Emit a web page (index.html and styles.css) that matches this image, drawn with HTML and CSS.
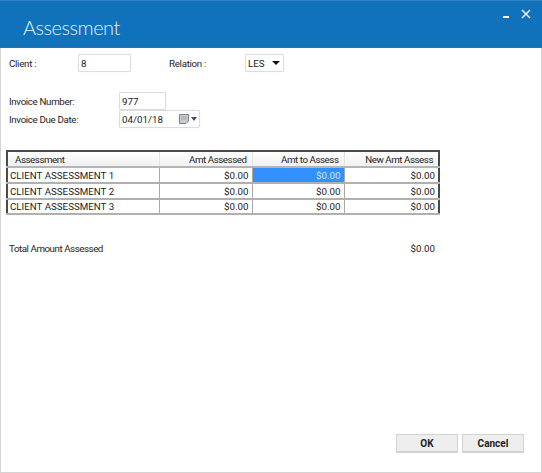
FILE: index.html
```html
<!DOCTYPE html>
<html lang="en">
<head>
  <meta charset="UTF-8" />
  <title>Assessment</title>
  <link rel="stylesheet" href="styles.css">
</head>
<body>
  <div class="window">
    <div class="titlebar">
      <h1 class="title">Assessment</h1>
      <div class="window-controls">
        <svg width="8" height="12" viewBox="0 0 8 12"><rect x="1" y="7" width="6" height="2" fill="#fff"/></svg>
        <svg width="10" height="10" viewBox="0 0 10 10"><path d="M1 1L9 9M9 1L1 9" stroke="#fff" stroke-width="1.4" fill="none"/></svg>
      </div>
    </div>
    <div class="content">
      <div class="client-row">
        <label class="client-label">Client :</label>
        <input class="field client-input" type="text" value="8">
        <label class="relation-label">Relation :</label>
        <div class="field relation-select">
          <span>LES</span>
          <span class="arrow"></span>
        </div>
      </div>
      <div class="invoice-block">
        <div class="invoice-row">
          <label class="invoice-label">Invoice Number:</label>
          <input class="field invoice-input" type="text" value="977">
        </div>
        <div class="invoice-row">
          <label class="invoice-label">Invoice Due Date:</label>
          <div class="field date-picker">
            <span>04/01/18</span>
            <span class="date-icons">
              <svg width="12" height="12" viewBox="0 0 12 12"><path d="M1.5 1.5H10.5V8L8 10.5H1.5Z" fill="#c9ccd0" stroke="#7d8288"/><path d="M3 4H9M3 6H9" stroke="#a5a9ae"/></svg>
              <span class="arrow arrow-blue"></span>
            </span>
          </div>
        </div>
      </div>
      <table class="grid">
        <thead>
          <tr>
            <th class="col-name">Assessment</th>
            <th class="col-amt">Amt Assessed</th>
            <th class="col-to">Amt to Assess</th>
            <th class="col-new">New Amt Assess</th>
          </tr>
        </thead>
        <tbody>
          <tr>
            <td>CLIENT ASSESSMENT 1</td>
            <td class="money">$0.00</td>
            <td class="money selected">$0.00</td>
            <td class="money">$0.00</td>
          </tr>
          <tr>
            <td>CLIENT ASSESSMENT 2</td>
            <td class="money">$0.00</td>
            <td class="money">$0.00</td>
            <td class="money">$0.00</td>
          </tr>
          <tr class="last-row">
            <td>CLIENT ASSESSMENT 3</td>
            <td class="money">$0.00</td>
            <td class="money">$0.00</td>
            <td class="money">$0.00</td>
          </tr>
        </tbody>
      </table>
      <div class="total-row">
        <span class="total-label">Total Amount Assessed</span>
        <span>$0.00</span>
      </div>
      <div class="actions">
        <button class="btn">OK</button>
        <button class="btn">Cancel</button>
      </div>
    </div>
  </div>
</body>
</html>
```

FILE: styles.css
```css
html, body {
  height: 100%;
}
body {
  margin: 0;
  font-family: 'Roboto', 'Liberation Sans', Arial, sans-serif;
  font-size: 9.75px;
  color: #222;
  background: #fff;
}
.window {
  box-sizing: border-box;
  display: flex;
  flex-direction: column;
  height: 473px;
  border: 1px solid #d4d4d4;
  border-top: none;
}
.titlebar {
  display: flex;
  justify-content: space-between;
  height: 48px;
  margin: 0 -1px;
  background: #0f72ba;
  border-top: 1px solid #2c82c2;
  border-bottom: 1px solid #2a6ea6;
  box-sizing: border-box;
  color: #fff;
}
.title {
  margin: 12px 0 0 23px;
  font-family: 'Lato', sans-serif;
  font-size: 20px;
  font-weight: 300;
  letter-spacing: -0.5px;
  line-height: 28px;
  color: #e4f0f9;
}
.window-controls {
  display: flex;
  align-items: flex-start;
  gap: 11px;
  margin: 8px 11px 0 0;
}
.content {
  flex: 1;
  display: flex;
  flex-direction: column;
  padding: 0 5px 0 5px;
}
.field {
  box-sizing: border-box;
  height: 18px;
  padding: 0 2px;
  border: 1px solid #dcdcdc;
  border-radius: 2px;
  background: #fff;
  font: inherit;
  color: #222;
  outline: none;
  box-shadow: 0 0 1px #ddd;
}
.client-row {
  display: flex;
  align-items: center;
  margin-top: 6px;
  height: 18px;
}
.client-label {
  width: 72px;
  padding-left: 3px;
  box-sizing: border-box;
  letter-spacing: -0.3px;
}
.client-input {
  width: 53px;
}
.relation-label {
  width: 75px;
  margin-left: 38px;
  margin-right: 1px;
  letter-spacing: -0.3px;
}
.relation-select {
  width: 39px;
  display: flex;
  align-items: center;
  justify-content: space-between;
  padding-right: 3px;
}
.arrow {
  width: 0;
  height: 0;
  border-left: 4px solid transparent;
  border-right: 4px solid transparent;
  border-top: 4px solid #111;
}
.arrow-blue {
  border-left-width: 3px;
  border-right-width: 3px;
  border-top-color: #3a4f6b;
}
.invoice-block {
  margin-top: 20px;
}
.invoice-row {
  display: flex;
  align-items: center;
  height: 18px;
}
.invoice-label {
  width: 113px;
  padding-left: 3px;
  box-sizing: border-box;
  letter-spacing: -0.35px;
}
.invoice-input {
  width: 47px;
}
.date-picker {
  width: 81px;
  display: flex;
  align-items: center;
  justify-content: space-between;
  padding-right: 2px;
}
.date-icons {
  display: flex;
  align-items: center;
  gap: 1px;
}
.grid {
  width: 434px;
  margin-top: 22px;
  border-collapse: collapse;
  table-layout: fixed;
  border: 2px solid #4a4a4a;
}
.grid th {
  height: 16px;
  padding: 1px 5px 0 7px;
  font-weight: normal;
  text-align: right;
  background: linear-gradient(#fff, #f0f0f0);
  border-right: 1px solid #e4e4e4;
  border-bottom: 2px solid #b5b5b5;
  box-sizing: border-box;
  letter-spacing: -0.45px;
}
.grid th.col-name {
  text-align: left;
}
.col-name {
  width: 152px;
}
.col-amt {
  width: 93px;
}
.col-to {
  width: 92px;
}
.grid td {
  height: 16px;
  padding: 0 3px 0 2px;
  border-right: 1px solid #a8a8a8;
  border-bottom: 2px solid #b0b0b0;
  box-sizing: border-box;
  white-space: nowrap;
}
.grid .last-row td {
  height: 15px;
}
.grid td.money {
  text-align: right;
}
.grid td.selected {
  background: #3391ff;
  color: #cfe4ff;
}
.total-row {
  display: flex;
  justify-content: space-between;
  width: 426px;
  margin: 28px 0 0 3px;
}
.total-label {
  letter-spacing: -0.45px;
}
.actions {
  display: flex;
  justify-content: flex-end;
  gap: 4px;
  margin-top: auto;
  margin-bottom: 19px;
  padding-right: 12px;
}
.btn {
  width: 62px;
  height: 19px;
  padding: 0;
  background: #eeeeee;
  border: 1px solid #d2d2d2;
  border-bottom-width: 2px;
  font: bold 10px 'Roboto', 'Liberation Sans', Arial, sans-serif;
  color: #222;
}
```
